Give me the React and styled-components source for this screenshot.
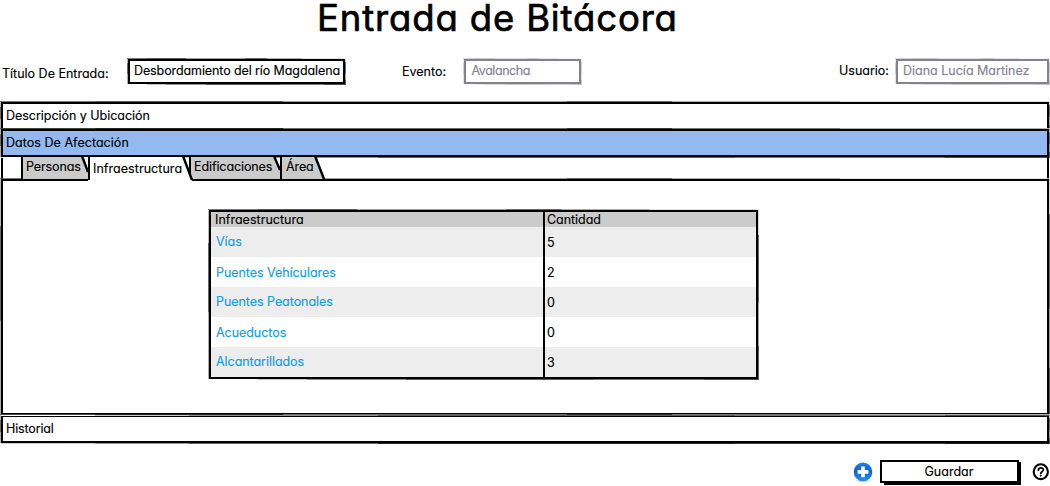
import React from "react";
import styled, { createGlobalStyle, css } from "styled-components";

const Global = createGlobalStyle`
  * { box-sizing: border-box; }
  body {
    margin: 0;
    background: #fff;
    color: #000;
    overflow: hidden;
    font-family: Inter, "Liberation Sans", sans-serif;
    font-size: 12.5px;
    line-height: 16px;
    font-feature-settings: "cv11";
    -webkit-text-stroke: 0.15px currentColor;
    white-space: nowrap;
  }
`;

/* Uneven one-pixel fringe that gives straight borders a hand-drawn edge. */
const sketched = css`
  position: relative;
  &::before {
    content: "";
    position: absolute;
    inset: -3px;
    pointer-events: none;
    background:
      linear-gradient(90deg, #555 0 9%, #333 9% 27%, #888 27% 54%, #444 54% 64%, #999 64% 80%, #ddd 80%) 0 0 / 100% 1px no-repeat,
      linear-gradient(90deg, #fff 0 9%, #bbb 9% 18%, #777 18% 36%, #333 36% 70%, #555 70% 90%, #222 90%) 0 100% / 100% 1px no-repeat,
      linear-gradient(180deg, #aaa 0 20%, #444 20% 60%, #999 60%) 0 0 / 1px 100% no-repeat,
      linear-gradient(180deg, #ccc 0 15%, #444 15% 55%, #888 55% 80%, #333 80%) 100% 0 / 1px 100% no-repeat;
    opacity: ${(p) => p.$fringe ?? 0.8};
  }
`;

const Page = styled.main`
  width: 1050px;
  height: 486px;
  display: flex;
  flex-direction: column;
`;

const Title = styled.h1`
  margin: 0;
  height: 58px;
  padding-left: 317px;
  font-size: 36.5px;
  font-weight: 400;
  line-height: 37px;
  letter-spacing: 0.85px;
  -webkit-text-stroke: 0.7px #000;
`;

const Fields = styled.div`
  height: 44px;
  display: flex;
  align-items: flex-start;
`;

const Label = styled.label`
  width: ${(p) => p.$width}px;
  padding-left: ${(p) => p.$indent}px;
  padding-top: ${(p) => p.$drop}px;
`;

const Field = styled.div`
  ${sketched}
  width: ${(p) => p.$width}px;
  height: 25px;
  margin-top: 1px;
  padding: 2px 0 0 ${(p) => p.$pad ?? 4}px;
  border: 2px solid ${(p) => (p.$disabled ? "#85818f" : "#000")};
  color: ${(p) => (p.$disabled ? "#85818f" : "#000")};
  letter-spacing: ${(p) => p.$tracking || 0}px;
`;

const Accordion = styled.section`
  margin: 0 1px;
`;

const Bar = styled.div`
  ${sketched}
  height: ${(p) => p.$height}px;
  padding: ${(p) => p.$top}px 0 0 3px;
  border: 2px solid #000;
  border-width: ${(p) => p.$borders};
  background: ${(p) => (p.$selected ? "#93b9f1" : "#fff")};
  letter-spacing: ${(p) => p.$tracking || 0}px;
`;

const TabStrip = styled.div`
  height: 22px;
  padding-left: 18px;
  display: flex;
  border: solid #000;
  border-width: 0 2px;
`;

const Tab = styled.div`
  position: relative;
  z-index: ${(p) => (p.$active ? 2 : 1)};
  width: ${(p) => p.$width}px;
  padding: ${(p) => (p.$active ? 4 : 2)}px 0 0 ${(p) => p.$pad}px;
  letter-spacing: ${(p) => (p.$active ? 0.05 : -0.1)}px;
  span {
    position: relative;
  }
`;

const TabShape = styled.svg`
  position: absolute;
  left: 0;
  top: 0;
  overflow: visible;
`;

const Panel = styled.div`
  ${sketched}
  height: 236px;
  margin-bottom: 1px;
  padding: 29px 0 0 206px;
  border: 2px solid #000;
`;

const Table = styled.div`
  ${sketched}
  width: 549px;
  border: 2px solid #000;
`;

const Row = styled.div`
  height: ${(p) => (p.$head ? 15 : 30)}px;
  display: grid;
  grid-template-columns: 332px 1fr;
  background: ${(p) => (p.$head ? "#cbcbcb" : p.$striped ? "#ededed" : "#fff")};
`;

const Cell = styled.div`
  padding: ${(p) => p.$top}px 0 0 ${(p) => (p.$link ? 5 : 4)}px;
  color: ${(p) => (p.$link ? "#0f9fe6" : "#000")};
  letter-spacing: ${(p) => p.$tracking || 0}px;
`;

const Amount = styled(Cell)`
  padding-left: 2px;
  border-left: 2px solid #000;
`;

const Footer = styled.footer`
  padding: 16px 0 0 853px;
  display: flex;
`;

const AddIcon = styled.svg`
  margin-top: 1px;
`;

const SaveButton = styled.div`
  width: 139px;
  height: 23px;
  margin: 0 12px 0 7px;
  padding: 2px 1px 0 0;
  border: 2px solid #000;
  background: #fff;
  box-shadow: 3px 3px 0 -1px #000, 3px 1px 0 -1px #000;
  text-align: center;
`;

const HelpIcon = styled.svg`
  margin-top: 2px;
`;

function TabItem({ width, pad, active, slant, end, children }) {
  const bottom = active ? 24 : 22;
  return (
    <Tab $width={width} $pad={pad} $active={active}>
      <TabShape width={width} height="24">
        <polygon
          points={`0,0 ${slant},0 ${end[0]},${end[1]} ${end[0]},${bottom} 0,${bottom}`}
          fill={active ? "#fff" : "#cbcbcb"}
        />
        <path d={`M1 0V${active ? 23 : 22}`} stroke="#000" strokeWidth="2" />
        <path d={`M${slant} -1L${end[0]} ${end[1]}`} stroke="#000" strokeWidth="2.4" />
      </TabShape>
      <span>{children}</span>
    </Tab>
  );
}

const rows = [
  ["Vías", 5, 7, 8],
  ["Puentes Vehículares", 2, 8, 8],
  ["Puentes Peatonales", 0, 7, 8],
  ["Acueductos", 0, 8, 8],
  ["Alcantarillados", 3, 7, 8],
];

export default function App() {
  return (
    <Page>
      <Global />
      <Title>Entrada de Bitácora</Title>
      <Fields>
        <Label $width={128} $indent={2} $drop={8}>Título De Entrada:</Label>
        <Field $width={217} $tracking={-0.1}>Desbordamiento del río Magdalena</Field>
        <Label $width={119} $indent={57} $drop={6}>Evento:</Label>
        <Field $width={117} $disabled $fringe={0.25} $pad={5.5} $tracking={-0.45}>Avalancha</Field>
        <Label $width={315} $indent={258} $drop={5}>Usuario:</Label>
        <Field $width={153} $disabled $fringe={0.25} $pad={5}>Diana Lucía Martinez</Field>
      </Fields>

      <Accordion>
        <Bar $height={26} $top={4} $borders="2px 2px 0" $tracking={-0.03}>Descripción y Ubicación</Bar>
        <Bar $height={29} $top={4} $borders="3px 2px 2px" $tracking={0.04} $selected>Datos De Afectación</Bar>
        <TabStrip>
          <TabItem width={67} pad={5} slant={61} end={[67, 15]}>Personas</TabItem>
          <TabItem width={101} pad={5} slant={95} end={[104, 23]} active>Infraestructura</TabItem>
          <TabItem width={91} pad={5} slant={85} end={[91, 13]}>Edificaciones</TabItem>
          <TabItem width={45} pad={6} slant={35} end={[44, 22]}>Área</TabItem>
        </TabStrip>
        <Panel>
          <Table>
            <Row $head>
              <Cell $top={0} $tracking={0.02}>Infraestructura</Cell>
              <Amount $top={0} $tracking={-0.05}>Cantidad</Amount>
            </Row>
            {rows.map(([name, amount, top, amountTop], i) => (
              <Row key={name} $striped={i % 2 === 0}>
                <Cell $link $top={top} $tracking={-0.05}>{name}</Cell>
                <Amount $top={amountTop}>{amount}</Amount>
              </Row>
            ))}
          </Table>
        </Panel>
        <Bar $height={28} $top={4} $borders="1px 2px 3px" $tracking={-0.15}>Historial</Bar>
      </Accordion>

      <Footer>
        <AddIcon width="20" height="22" viewBox="0 0 20 22">
          <defs>
            <linearGradient id="blue" x1="0" y1="0" x2="0" y2="1">
              <stop offset="0" stopColor="#2b7be0" />
              <stop offset="0.45" stopColor="#0d62d2" />
              <stop offset="1" stopColor="#2390f5" />
            </linearGradient>
          </defs>
          <ellipse cx="10" cy="19.6" rx="7" ry="1.7" fill="#000" opacity="0.12" />
          <circle cx="10" cy="10.9" r="9.3" fill="url(#blue)" />
          <path d="M10 5.5V16.3M4.6 10.9H15.4" stroke="#fff" strokeWidth="3.6" />
        </AddIcon>
        <SaveButton>Guardar</SaveButton>
        <HelpIcon width="19" height="20" viewBox="0 0 19 20" fill="none" stroke="#000">
          <ellipse cx="9.8" cy="9.7" rx="7.1" ry="7.4" strokeWidth="2.1" />
          <path d="M7.4 8.2C7.4 5.2 12.6 5.3 12.4 8C12.2 9.6 10 9.4 9.8 11.4" strokeWidth="1.8" strokeLinecap="round" />
          <circle cx="9.7" cy="13.7" r="0.6" fill="#000" strokeWidth="0.8" />
        </HelpIcon>
      </Footer>
    </Page>
  );
}
